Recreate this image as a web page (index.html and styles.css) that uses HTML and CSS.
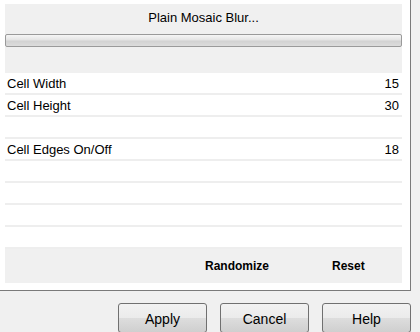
FILE: index.html
```html
<!DOCTYPE html>
<html lang="en">
<head>
    <meta charset="UTF-8">
    <meta name="viewport" content="width=device-width, initial-scale=1.0">
    <title>Plain Mosaic Blur</title>
    <link rel="stylesheet" href="styles.css">
</head>
<body>
    <div class="panel">
        <div class="header">
            <div class="title">Plain Mosaic Blur...</div>
            <div class="progress"></div>
        </div>
        <div class="rows">
            <div class="row"><span>Cell Width</span><span>15</span></div>
            <div class="row"><span>Cell Height</span><span>30</span></div>
            <div class="row"></div>
            <div class="row"><span>Cell Edges On/Off</span><span>18</span></div>
            <div class="row"></div>
            <div class="row"></div>
            <div class="row"></div>
            <div class="row"></div>
        </div>
        <div class="actions">
            <span class="randomize">Randomize</span>
            <span class="reset">Reset</span>
        </div>
    </div>
    <div class="buttons">
        <button>Apply</button>
        <button>Cancel</button>
        <button>Help</button>
    </div>
</body>
</html>
```
FILE: styles.css
```css
body {
    margin: 0;
    background: #f0f0f0;
    font-family: 'Liberation Sans', Arial, sans-serif;
    color: #000;
    width: 420px;
    height: 332px;
    overflow: hidden;
}
.panel {
    width: 397px;
    height: 286px;
    padding: 4px 8px 0 5px;
    background: #fff;
    border-right: 1px solid #7a7a7a;
    border-bottom: 1px solid #7a7a7a;
}
.header {
    height: 69px;
    background: #f0f0f0;
}
.title {
    height: 30px;
    line-height: 28px;
    text-align: center;
    font-size: 13px;
}
.progress {
    height: 11px;
    border: 1px solid #9a9a9a;
    border-radius: 2px;
    background: linear-gradient(#f6f6f6, #e4e4e4 45%, #d2d2d2 55%, #dcdcdc);
}
.row {
    height: 20px;
    border-bottom: 2px solid #eeeeee;
    display: flex;
    justify-content: space-between;
    align-items: center;
    padding: 0 3px 0 2px;
    font-size: 13px;
}
.actions {
    height: 34px;
    background: #f0f0f0;
    display: flex;
    align-items: center;
    font-size: 12px;
    font-weight: bold;
}
.randomize {
    margin-left: 200px;
}
.reset {
    margin-left: 63px;
}
.buttons {
    display: flex;
    justify-content: flex-end;
    gap: 13px;
    padding: 12px 9px 0 0;
}
button {
    width: 89px;
    height: 30px;
    font-family: 'Liberation Sans', Arial, sans-serif;
    font-size: 14px;
    color: #000;
    border: 1px solid #707070;
    border-radius: 3px;
    background: linear-gradient(#f2f2f2, #ebebeb 50%, #dddddd 51%, #cfcfcf);
    padding: 1px 0 0;
}
```
